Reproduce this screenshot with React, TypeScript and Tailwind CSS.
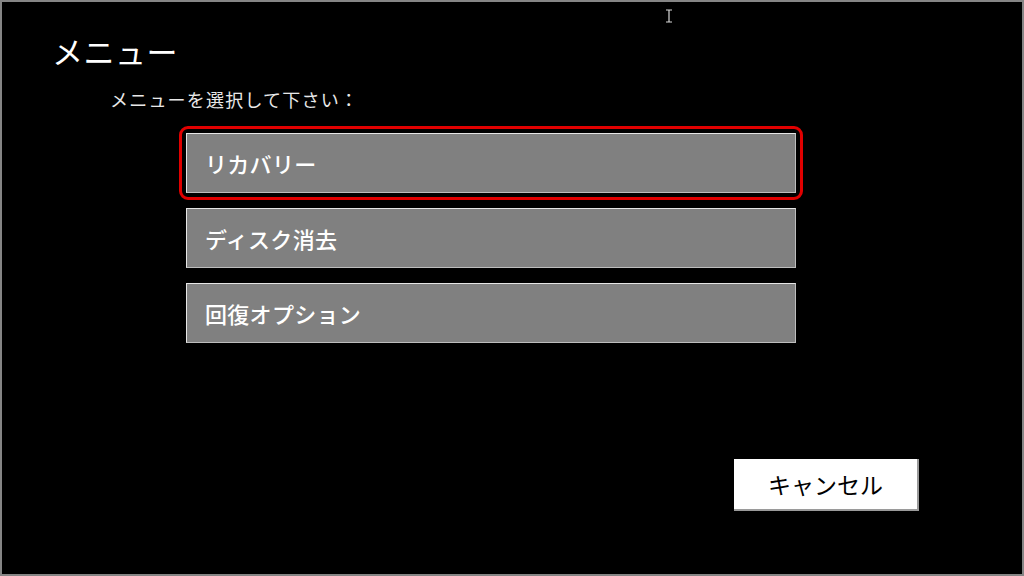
import React from 'react'

const jp = { fontFamily: '"Noto Sans CJK JP", "Noto Sans", sans-serif' }

const items = ['リカバリー', 'ディスク消去', '回復オプション']

function MenuButton({ label }: { label: string }) {
  return (
    <button
      className="flex h-[60px] w-full items-center border border-t-[#e6e6e6] border-l-[#e6e6e6] border-r-[#bdbdbd] border-b-[#bdbdbd] bg-[#808080] pl-[18px] text-left text-[22px] font-medium tracking-[0.3px] text-white"
      style={jp}
    >
      {label}
    </button>
  )
}

export default function App() {
  return (
    <div className="relative h-[576px] w-[1024px] overflow-hidden border-2 border-[#858585] bg-black" style={jp}>
      <div className="pl-[50px] pt-[31px] text-[31px] leading-[36px] tracking-[0.5px] text-white">メニュー</div>
      <div className="mt-[18px] pl-[108px] text-[18px] leading-[24px] tracking-[1.2px] text-[#e8e8e8]">メニューを選択して下さい：</div>

      <div className="ml-[184px] mt-[22px] flex w-[610px] flex-col gap-[15px]">
        <div className="-mx-[7px] -my-[7px] rounded-[9px] border-[3px] border-[#e10000] p-[4px]">
          <MenuButton label={items[0]} />
        </div>
        <MenuButton label={items[1]} />
        <MenuButton label={items[2]} />
      </div>

      <div className="mt-[116px] flex justify-end pr-[103px]">
        <button className="h-[52px] w-[185px] border-b-2 border-r-2 border-[#9a9a9a] bg-white text-[23px] text-black" style={jp}>
          キャンセル
        </button>
      </div>

      {/* mouse cursor */}
      <svg className="absolute left-[662px] top-[7px]" width="10" height="14" viewBox="0 0 10 14">
        <path d="M2 1h6M2 13h6M5 1v12" stroke="#d8d8d8" strokeWidth="1.2" fill="none" />
      </svg>
    </div>
  )
}
